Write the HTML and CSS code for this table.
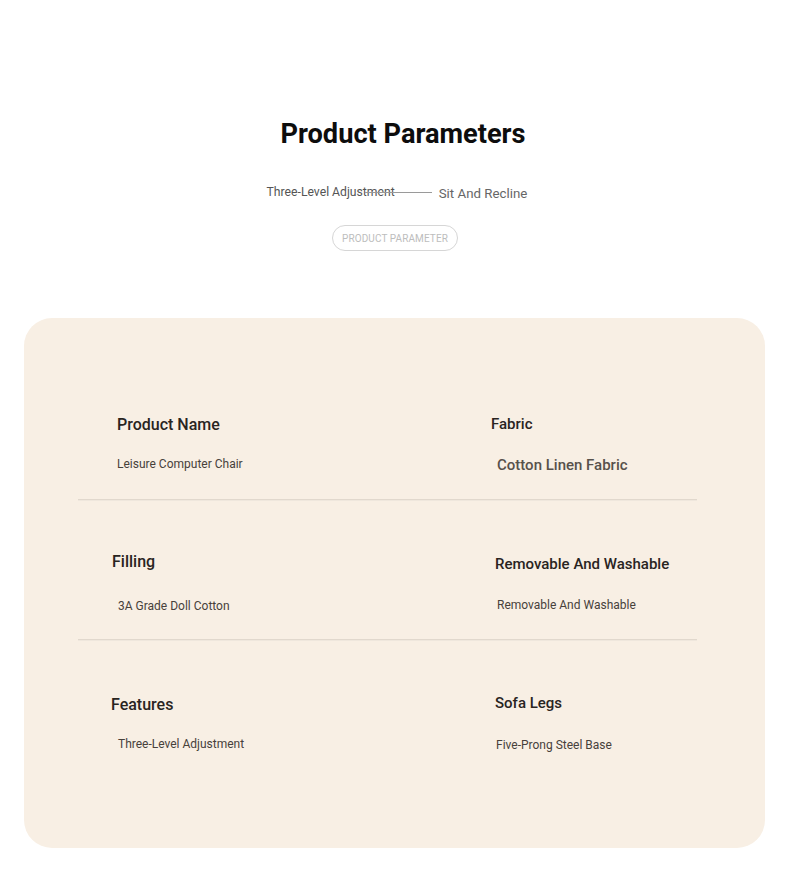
FILE: index.html
```html
<!DOCTYPE html>
<html lang="en">
<head>
<meta charset="utf-8">
<title>Product Parameters</title>
<link rel="stylesheet" href="styles.css">
</head>
<body>
<header class="intro">
  <h1 class="title">Product Parameters</h1>
  <div class="sub">
    <span class="sub-left">Three-Level Adjustment</span>
    <span class="sub-line"></span>
    <span class="sub-right">Sit And Recline</span>
  </div>
  <div class="pill">PRODUCT PARAMETER</div>
</header>

<section class="card">
  <div class="row row-1">
    <div class="cell cell-left">
      <div class="label">Product Name</div>
      <div class="value v-gap-17">Leisure Computer Chair</div>
    </div>
    <div class="cell cell-right">
      <div class="label label-sm up-1">Fabric</div>
      <div class="value value-lg shift-6 v-gap-19">Cotton Linen Fabric</div>
    </div>
  </div>
  <div class="row row-2">
    <div class="cell cell-left">
      <div class="label shift-m5">Filling</div>
      <div class="value shift-1 v-gap-22">3A Grade Doll Cotton</div>
    </div>
    <div class="cell cell-right down-2">
      <div class="label label-sm shift-4">Removable And Washable</div>
      <div class="value shift-6 v-gap-19">Removable And Washable</div>
    </div>
  </div>
  <div class="row row-3">
    <div class="cell cell-left down-1">
      <div class="label shift-m6">Features</div>
      <div class="value shift-1 v-gap-17">Three-Level Adjustment</div>
    </div>
    <div class="cell cell-right">
      <div class="label label-sm shift-4 up-1">Sofa Legs</div>
      <div class="value shift-5 v-gap-20">Five-Prong Steel Base</div>
    </div>
  </div>
</section>
</body>
</html>
```

FILE: styles.css
```css
* { box-sizing: border-box; }

html, body {
  margin: 0;
  padding: 0;
  background: #ffffff;
  font-family: Roboto, "Liberation Sans", Arial, sans-serif;
}

.intro {
  display: flex;
  flex-direction: column;
  align-items: center;
  padding-top: 118px;
}

.title {
  margin: 0;
  font-size: 27.2px;
  line-height: 32px;
  font-weight: 700;
  color: #0d0d0d;
  position: relative;
  left: 8px;
}

.sub {
  margin-top: 32px;
  padding-left: 4px;
  display: flex;
  align-items: center;
  height: 20px;
  color: #5a5a5a;
}

.sub-left {
  font-size: 12.2px;
  line-height: 20px;
  color: #555;
}

.sub-line {
  width: 67px;
  height: 1px;
  background: #9a9a9a;
  margin-left: -30px;
  margin-right: 7px;
}

.sub-right {
  font-size: 13.3px;
  line-height: 20px;
  position: relative;
  top: 2px;
  color: #666;
}

.pill {
  margin-top: 23px;
  height: 26px;
  padding: 0 9px;
  border: 1px solid #d6d6d6;
  border-radius: 13px;
  font-size: 10px;
  line-height: 25px;
  letter-spacing: 0.1px;
  color: #bdbdbd;
}

.card {
  margin: 67px 25px 0 24px;
  background: #f8efe4;
  border-radius: 28px;
  padding: 81px 68px 93px 54px;
}

.row {
  display: grid;
  grid-template-columns: 413px 1fr;
  border-bottom: 1px solid #e1d8cd;
  box-shadow: 0 1px 0 #efe7dd;
}

.row-1 { padding: 14px 0 24px; }
.row-2 { padding: 50px 0 23px; }
.row-3 { padding: 52px 0 0; border-bottom: none; box-shadow: none; }

.cell {
  display: flex;
  flex-direction: column;
  align-items: flex-start;
}

.cell-left { padding-left: 39px; }
.cell-right { padding-left: 0; }

.down-1 { padding-top: 1px; }
.down-2 { padding-top: 2px; }
.up-1 { margin-top: -1px; }

.label {
  font-size: 16px;
  line-height: 24px;
  font-weight: 500;
  color: #29241f;
}

.label-sm { font-size: 15px; }

.value {
  font-size: 12px;
  line-height: 20px;
  color: #47413b;
}

.value-lg {
  font-size: 15px;
  font-weight: 500;
  color: #57514b;
}

.v-gap-17 { margin-top: 17px; }
.v-gap-19 { margin-top: 19px; }
.v-gap-20 { margin-top: 20px; }
.v-gap-22 { margin-top: 22px; }

.shift-1 { margin-left: 1px; }
.shift-4 { margin-left: 4px; }
.shift-5 { margin-left: 5px; }
.shift-6 { margin-left: 6px; }
.shift-m5 { margin-left: -5px; }
.shift-m6 { margin-left: -6px; }
```
